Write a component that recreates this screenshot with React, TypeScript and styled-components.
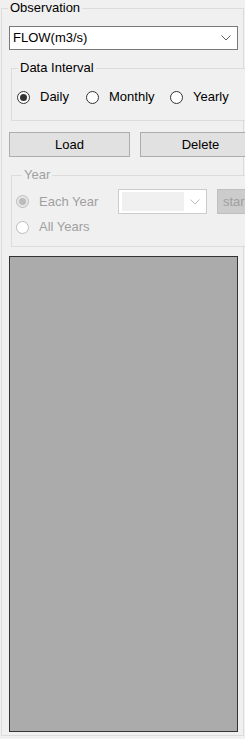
import React from 'react';
import styled, { createGlobalStyle } from 'styled-components';

const Global = createGlobalStyle`
  html, body { margin: 0; padding: 0; background: #f0f0f0; overflow: hidden; }
  body { font-family: "Liberation Sans", Arial, sans-serif; font-size: 13px; color: #000; }
`;

const Root = styled.div`
  width: 245px;
  height: 739px;
  overflow: hidden;
  background: #f0f0f0;
`;

const Group = styled.fieldset<{ $w: number; $ml: number; $mt: number; $pt: number; $pb: number; $pl: number }>`
  box-sizing: border-box;
  width: ${(p) => p.$w}px;
  min-width: 0;
  margin: ${(p) => p.$mt}px 0 0 ${(p) => p.$ml}px;
  padding: ${(p) => p.$pt}px 0 ${(p) => p.$pb}px ${(p) => p.$pl}px;
  border: 1px solid #dcdcdc;
  background: #f0f0f0;
`;

const Legend = styled.legend<{ $disabled?: boolean }>`
  font-size: 13px;
  line-height: 16px;
  padding: 0 2px;
  margin-left: 6px;
  color: ${(p) => (p.$disabled ? '#a0a0a0' : '#000')};
`;

const ComboWrap = styled.div`
  padding-left: 7px;
`;

const Combo = styled.div<{ $w: number; $disabled?: boolean }>`
  box-sizing: border-box;
  flex: none;
  width: ${(p) => p.$w}px;
  height: ${(p) => (p.$disabled ? 25 : 24)}px;
  border: 1px solid ${(p) => (p.$disabled ? '#cccccc' : '#7a7a7a')};
  background: #fff;
  display: flex;
  align-items: center;
  padding: ${(p) => (p.$disabled ? '2px 6px 2px 3px' : '0 6px 0 3px')};
  gap: 6px;
`;

const ComboText = styled.span`
  flex: 1;
  line-height: 16px;
  white-space: nowrap;
`;

const ComboFill = styled.span`
  flex: 1;
  align-self: stretch;
  background: #f0f0f0;
`;

const Chevron = ({ color }: { color: string }) => (
  <svg width="10" height="6" viewBox="0 0 10 6" style={{ flex: 'none' }}>
    <polyline points="0.5,0.5 5,5 9.5,0.5" fill="none" stroke={color} strokeWidth="1" />
  </svg>
);

const RadioRow = styled.div<{ $pl: number }>`
  display: flex;
  align-items: center;
  padding-left: ${(p) => p.$pl}px;
  height: 16px;
`;

const YearRow = styled.div<{ $mt?: number }>`
  display: flex;
  align-items: center;
  gap: 0;
  margin-top: ${(p) => p.$mt ?? 0}px;
`;

const Spacer = styled.div<{ $w: number }>`
  width: ${(p) => p.$w}px;
  flex: none;
`;

const RadioItem = styled.label<{ $w?: number; $disabled?: boolean }>`
  display: flex;
  align-items: center;
  gap: 10px;
  flex: none;
  width: ${(p) => (p.$w ? `${p.$w}px` : 'auto')};
  height: 16px;
  line-height: 16px;
  white-space: nowrap;
  color: ${(p) => (p.$disabled ? '#a0a0a0' : '#000')};
`;

const Circle = styled.span<{ $checked?: boolean; $disabled?: boolean }>`
  box-sizing: border-box;
  width: 13px;
  height: 13px;
  flex: none;
  border-radius: 50%;
  border: 1px solid ${(p) => (p.$disabled ? '#bcbcbc' : '#333333')};
  background: ${(p) => (p.$disabled ? (p.$checked ? '#e6e6e6' : '#fff') : '#fff')};
  display: flex;
  align-items: center;
  justify-content: center;
  &::after {
    content: '';
    display: ${(p) => (p.$checked ? 'block' : 'none')};
    width: 7px;
    height: 7px;
    border-radius: 50%;
    background: ${(p) => (p.$disabled ? '#bcbcbc' : '#333333')};
  }
`;

const ButtonRow = styled.div`
  display: flex;
  gap: 10px;
  margin: 11px 0 0 7px;
`;

const Button = styled.div<{ $w: number; $disabled?: boolean }>`
  box-sizing: border-box;
  width: ${(p) => p.$w}px;
  height: 25px;
  flex: none;
  border: 1px solid ${(p) => (p.$disabled ? '#bfbfbf' : '#adadad')};
  background: ${(p) => (p.$disabled ? '#cccccc' : '#e1e1e1')};
  color: ${(p) => (p.$disabled ? '#a0a0a0' : '#000')};
  display: flex;
  align-items: center;
  justify-content: ${(p) => (p.$disabled ? 'flex-start' : 'center')};
  padding-left: ${(p) => (p.$disabled ? 5 : 0)}px;
  line-height: 16px;
  white-space: nowrap;
`;

const Chart = styled.div`
  box-sizing: border-box;
  width: 229px;
  height: 476px;
  margin: 9px 0 0 7px;
  border: 1px solid #333333;
  background: #ababab;
`;

const Radio = ({ label, checked, disabled, w }: { label: string; checked?: boolean; disabled?: boolean; w?: number }) => (
  <RadioItem $w={w} $disabled={disabled}>
    <Circle $checked={checked} $disabled={disabled} />
    <span>{label}</span>
  </RadioItem>
);

export default function App() {
  return (
    <Root>
      <Global />
      <Group $w={243} $ml={1} $mt={0} $pt={10} $pb={3} $pl={0}>
        <Legend>Observation</Legend>
        <ComboWrap>
          <Combo $w={229}>
            <ComboText>FLOW(m3/s)</ComboText>
            <Chevron color="#606060" />
          </Combo>
        </ComboWrap>
        <Group $w={260} $ml={9} $mt={10} $pt={13} $pb={15} $pl={0}>
          <Legend>Data Interval</Legend>
          <RadioRow $pl={5}>
            <Radio label="Daily" checked w={69} />
            <Radio label="Monthly" w={84} />
            <Radio label="Yearly" />
          </RadioRow>
        </Group>
        <ButtonRow>
          <Button $w={121}>Load</Button>
          <Button $w={121}>Delete</Button>
        </ButtonRow>
        <Group $w={260} $ml={9} $mt={10} $pt={6} $pb={11} $pl={4}>
          <Legend $disabled>Year</Legend>
          <YearRow>
            <Radio label="Each Year" checked disabled w={102} />
            <Combo $w={89} $disabled>
              <ComboFill />
              <Chevron color="#bcbcbc" />
            </Combo>
            <Spacer $w={10} />
            <Button $w={75} $disabled>start</Button>
          </YearRow>
          <YearRow $mt={5}>
            <Radio label="All Years" disabled />
          </YearRow>
        </Group>
        <Chart />
      </Group>
    </Root>
  );
}
